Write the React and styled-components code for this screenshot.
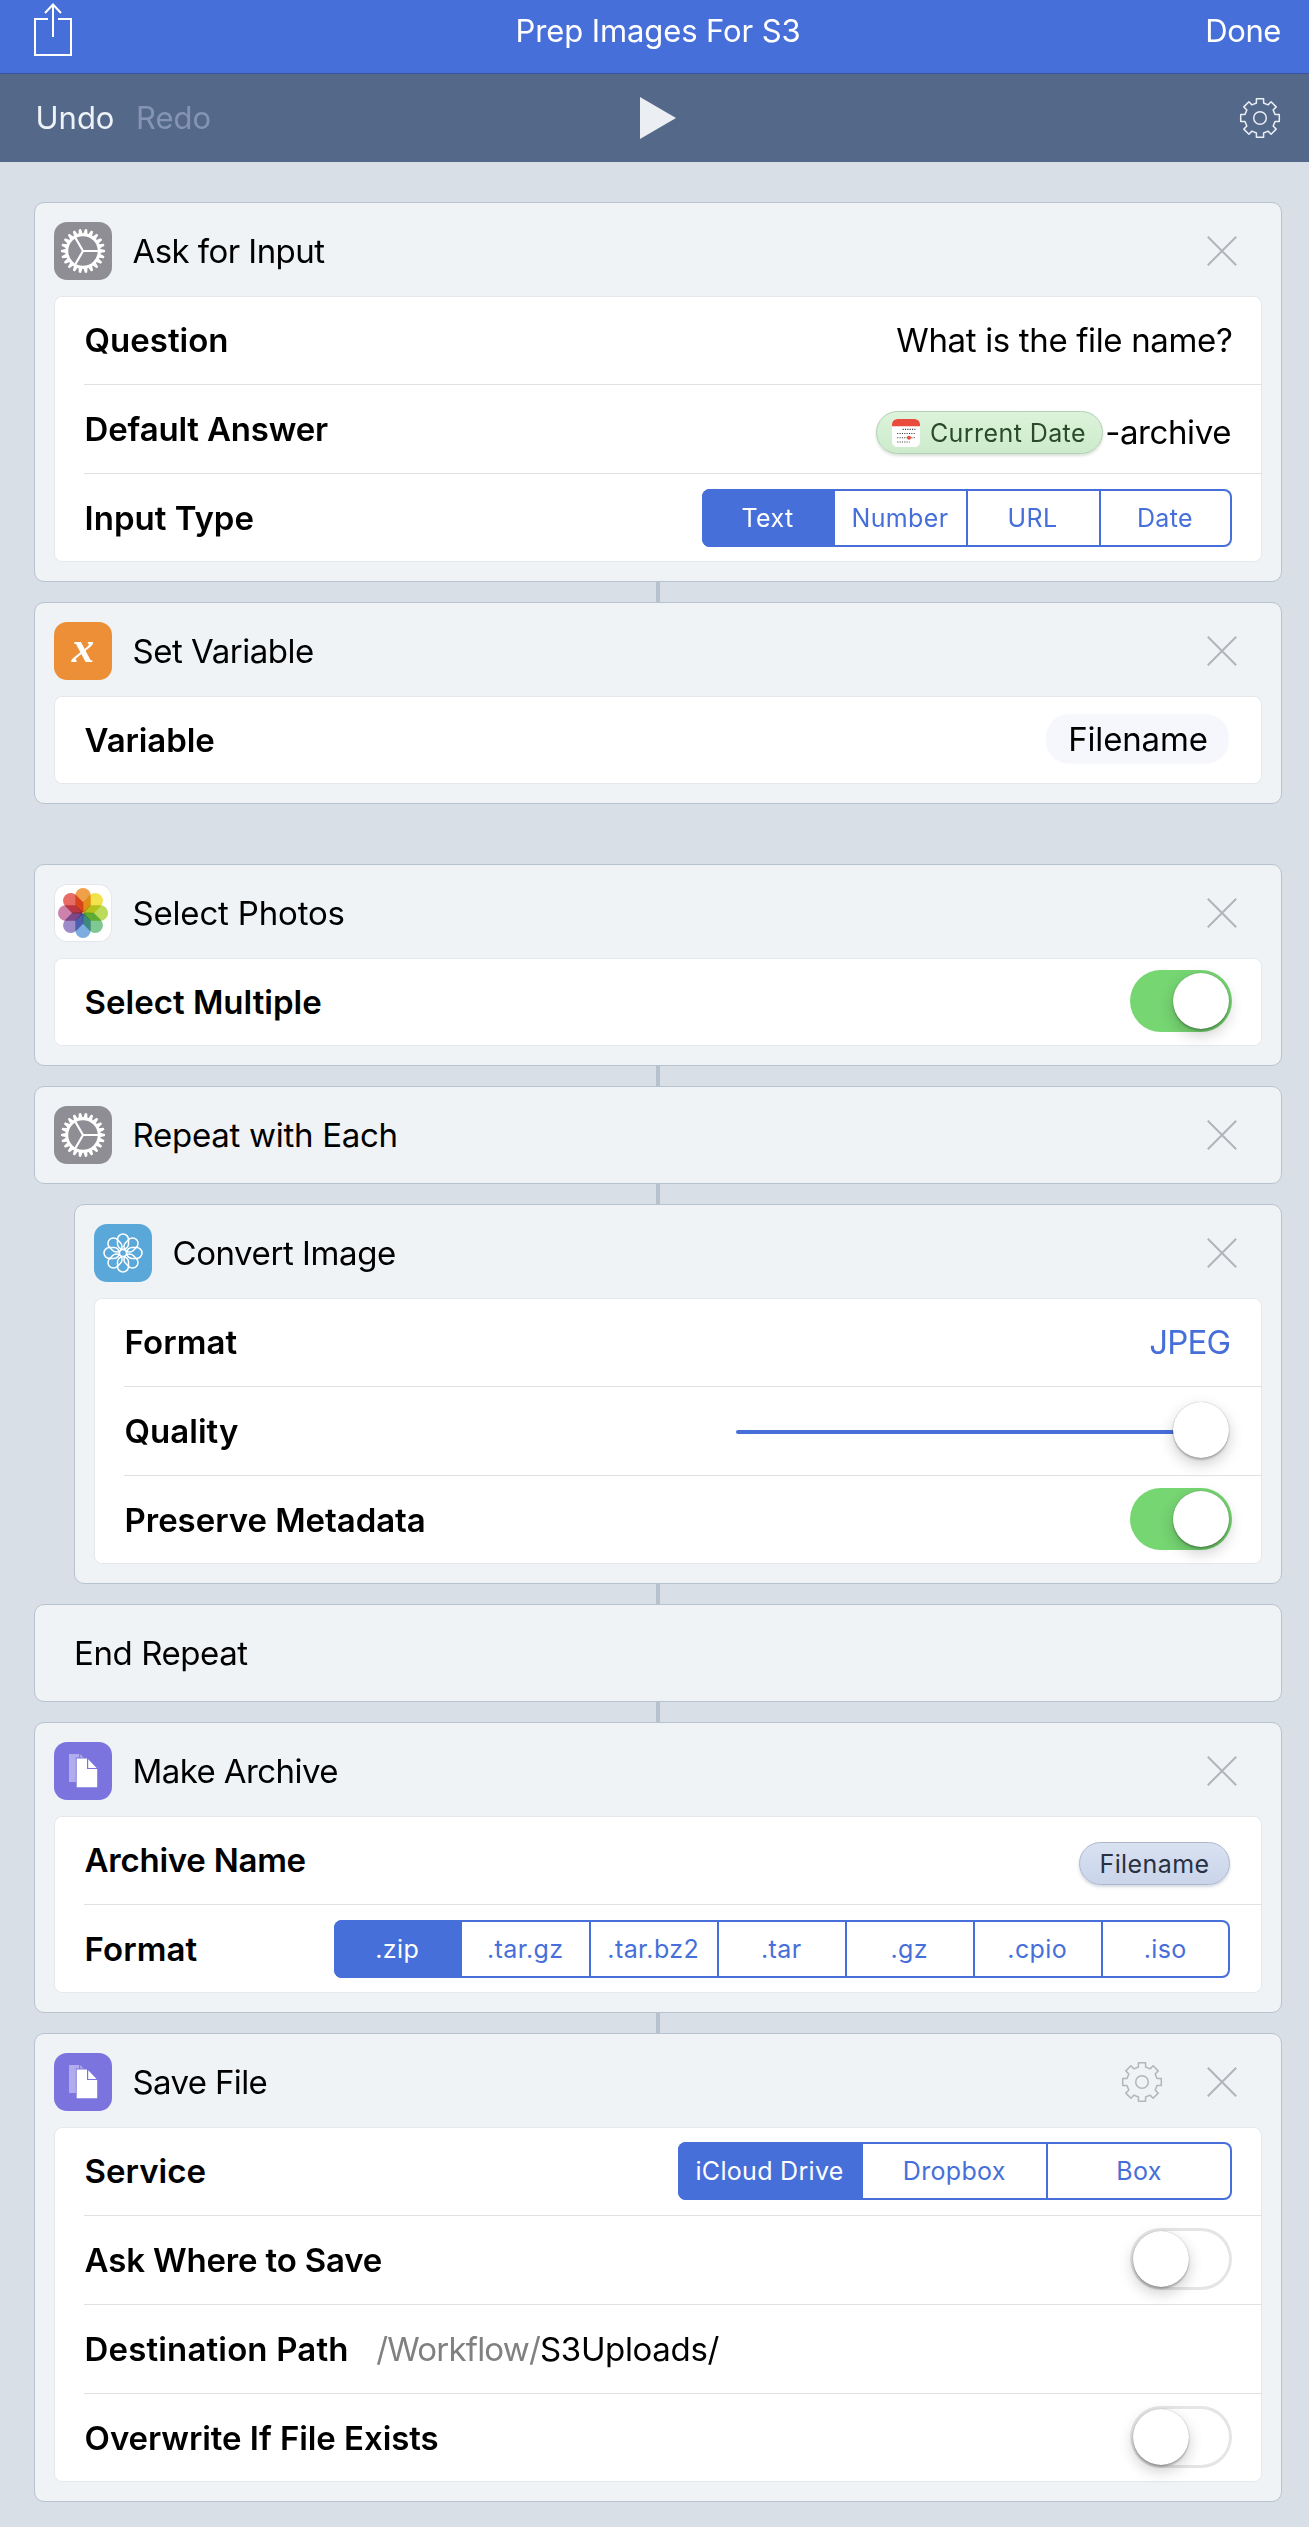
import React from 'react';
import styled, { createGlobalStyle, css } from 'styled-components';

const blue = '#466fd9';

const GlobalStyle = createGlobalStyle`
  *, *::before, *::after { box-sizing: border-box; }
  body {
    margin: 0;
    background: #d9dfe7;
    color: #000;
    font-family: Inter, "Liberation Sans", sans-serif;
  }
  svg { display: block; flex: none; overflow: visible; }
`;

const Page = styled.div`
  display: flex;
  flex-direction: column;
  min-height: 2527px;
`;

const Bar = styled.header`
  display: grid;
  grid-template-columns: 1fr auto 1fr;
  align-items: center;
  padding: 0 27px 0 34px;
  font-size: 31px;
  line-height: 38px;
  white-space: nowrap;
`;

const NavBar = styled(Bar)`
  height: 74px;
  padding-bottom: 11px;
  background: ${blue};
  border-bottom: 1px solid #3a54a4;
  color: #fff;
`;

const ToolBar = styled(Bar)`
  height: 88px;
  background: #54688a;
  color: #eef2f6;
`;

const BarGroup = styled.div`
  display: flex;
  align-items: center;
  gap: 21.5px;
  justify-content: ${(p) => (p.$end ? 'flex-end' : 'flex-start')};
  padding: ${(p) => p.$pad || '0'};
`;

const BarText = styled.span`
  color: ${(p) => (p.$muted ? '#8594b3' : 'inherit')};
  letter-spacing: ${(p) => p.$track || 0}px;
`;

const Flow = styled.main`
  display: flex;
  flex-direction: column;
  padding: 40px 27px 25px 34px;
`;

const Connector = styled.div`
  align-self: center;
  width: 4px;
  height: 20px;
  background: #b6c2cd;
`;

const Break = styled.div`
  height: 60px;
`;

const Card = styled.section`
  display: flex;
  flex-direction: column;
  gap: 16px;
  margin-left: ${(p) => (p.$nested ? 40 : 0)}px;
  padding: 19px;
  background: #eff3f6;
  border: 1px solid #b8c3cf;
  border-radius: 10px;
`;

const CardHeader = styled.div`
  display: flex;
  align-items: center;
  height: 58px;
  padding-right: 25.5px;
  gap: 20.5px;
`;

const CardTitle = styled.h2`
  flex: 1;
  margin: 0;
  padding-left: ${(p) => (p.$bare ? 20 : 0)}px;
  font-size: 33px;
  line-height: 40px;
  font-weight: 400;
  letter-spacing: ${(p) => p.$track || 0}px;
  white-space: nowrap;
`;

const HeaderActions = styled.div`
  display: flex;
  align-items: center;
  gap: 45px;
`;

const Tile = styled.div`
  display: flex;
  align-items: center;
  justify-content: center;
  flex: none;
  width: 58px;
  height: 58px;
  border-radius: 13px;
  background: ${(p) => p.$bg};
  ${(p) => p.$outlined && css`box-shadow: inset 0 0 0 1px #e3e6ea;`}
`;

const TileLetter = styled.span`
  padding-bottom: 9px;
  color: #fff;
  font: italic bold 45px/50px "Liberation Serif", "Times New Roman", serif;
`;

const Body = styled.div`
  display: flex;
  flex-direction: column;
  padding-left: 30px;
  background: #fff;
  border-radius: 8px;
  box-shadow: inset 0 0 0 1px #e4e8ec;
`;

const Row = styled.div`
  display: flex;
  align-items: center;
  justify-content: space-between;
  height: 88px;
  padding-right: ${(p) => p.$inset || 30}px;
  & + & {
    height: 89px;
    border-top: 1px solid #dfe1e3;
  }
`;

const Label = styled.span`
  padding-left: 0.6px;
  font-size: 33px;
  line-height: 40px;
  font-weight: 600;
  letter-spacing: ${(p) => p.$track || 0}px;
  white-space: nowrap;
`;

const Value = styled.span`
  font-size: 33px;
  line-height: 40px;
  color: ${(p) => p.$color || '#000'};
  letter-spacing: ${(p) => p.$track || 0}px;
  white-space: nowrap;
`;

const Path = styled.div`
  display: flex;
  flex: 1;
  padding-left: 27.5px;
`;

const TokenLine = styled.div`
  display: flex;
  align-items: center;
  gap: 2px;
  padding-top: 6px;
`;

const Token = styled.span`
  display: flex;
  align-items: center;
  justify-content: center;
  gap: 10px;
  width: ${(p) => p.$width}px;
  height: 43px;
  padding-top: 1px;
  border-radius: 22px;
  font-size: 25px;
  line-height: 30px;
  letter-spacing: 0.42px;
  white-space: nowrap;
  ${(p) =>
    p.$green
      ? css`
          color: #294b2b;
          background: linear-gradient(#dcf3da, #cdebcc);
          border: 1px solid #b3ceb3;
          box-shadow: 0 2px 3px rgba(60, 110, 60, 0.2);
          padding-right: 1.5px;
        `
      : css`
          color: #283142;
          background: linear-gradient(#d9e2f1, #cad4ea);
          border: 1px solid #adb7cb;
          box-shadow: 0 2px 3px rgba(60, 80, 120, 0.22);
        `}
`;

const VariableField = styled.span`
  display: flex;
  align-items: center;
  justify-content: center;
  width: 181px;
  height: 48px;
  margin-bottom: 2px;
  padding: 0 0 1px 1px;
  border-radius: 22px;
  background: #f6f7fc;
  box-shadow: 0 0 2px rgba(90, 100, 150, 0.12);
`;

const Segments = styled.div`
  display: flex;
  width: ${(p) => p.$width}px;
  height: 58px;
  border-radius: 8px;
  overflow: hidden;
  box-shadow: inset 0 0 0 2px ${blue};
`;

const Segment = styled.button`
  flex: 1 1 0;
  min-width: 0;
  padding: 0 1.5px 0 0;
  border: 0;
  font: 400 25px/30px Inter, "Liberation Sans", sans-serif;
  letter-spacing: ${(p) => p.$track}px;
  white-space: nowrap;
  background: ${(p) => (p.$active ? blue : 'transparent')};
  color: ${(p) => (p.$active ? '#fff' : blue)};
  & + & + & {
    box-shadow: -1px 0 0 ${blue}, inset 1px 0 0 ${blue};
  }
`;

const Knob = styled.span`
  flex: none;
  width: 56px;
  height: 56px;
  border-radius: 50%;
  background: #fff;
  box-shadow: 0 0 1px rgba(0, 0, 0, 0.35), 0 2px 2px rgba(0, 0, 0, 0.22),
    0 6px 15px rgba(0, 0, 0, 0.2);
`;

const SwitchTrack = styled.span`
  display: flex;
  align-items: center;
  justify-content: ${(p) => (p.$on ? 'flex-end' : 'flex-start')};
  width: 102px;
  height: 62px;
  margin-bottom: 2px;
  padding: 0 3px;
  border-radius: 31px;
  background: ${(p) => (p.$on ? '#76d672' : '#fff')};
  box-shadow: ${(p) => (p.$on ? 'none' : 'inset 0 0 0 3px #e5e5e5')};
`;

const SliderBox = styled.div`
  display: flex;
  align-items: center;
  width: 493px;
  margin-bottom: 2px;
`;

const SliderTrack = styled.span`
  flex: 1;
  height: 4px;
  margin: 4px -2px 0 0;
  border-radius: 2px;
  background: ${blue};
`;

const ShareBox = styled.span`
  padding-bottom: 3px;
`;

const Petal = styled.path`
  mix-blend-mode: multiply;
`;

const ShareIcon = () => (
  <ShareBox>
    <svg width="38" height="53" viewBox="0 0 38 53" fill="none" stroke="#fff" strokeWidth="2">
      <path d="M14 16H1v36h36V16H24M19 34V2M11 10l8-8.5 8 8.5" />
    </svg>
  </ShareBox>
);

const PlayIcon = () => (
  <svg width="36" height="42" viewBox="0 0 36 42">
    <path d="M0 0L36 21L0 42z" fill="#ebeff3" />
  </svg>
);

const gearOutline = (() => {
  const pts = [];
  for (let k = 0; k < 8; k++) {
    const a = (k * Math.PI) / 4;
    [[-3.6, -15], [-3.6, -19.3], [3.6, -19.3], [3.6, -15]].forEach(([x, y]) => {
      pts.push(
        `${(x * Math.cos(a) - y * Math.sin(a)).toFixed(2)},${(x * Math.sin(a) + y * Math.cos(a)).toFixed(2)}`
      );
    });
  }
  return pts.join(' ');
})();

const GearIcon = ({ color }) => (
  <svg width="40" height="40" viewBox="-20 -20 40 40" fill="none" stroke={color} strokeWidth="1.5">
    <polygon points={gearOutline} strokeLinejoin="round" />
    <circle r="6.3" />
  </svg>
);

const CloseIcon = () => (
  <svg width="30" height="30" viewBox="0 0 30 30" stroke="#b1b4b8" strokeWidth="2">
    <path d="M0.8 0.8L29.2 29.2M29.2 0.8L0.8 29.2" />
  </svg>
);

const CogTile = () => (
  <Tile $bg="#8f8e94">
    <svg width="44" height="44" viewBox="-22 -22 44 44" stroke="#fff" fill="none">
      <circle r="16.2" strokeWidth="2.9" />
      {Array.from({ length: 22 }, (_, i) => (
        <path
          key={i}
          d="M16.5 -2.2L22 -1.1L22 1.1L16.5 2.2z"
          fill="#fff"
          stroke="none"
          transform={`rotate(${(i * 360) / 22})`}
        />
      ))}
      <path d="M0 0H15M0 0L-7.5 -13M0 0L-7.5 13" strokeWidth="2.2" />
    </svg>
  </Tile>
);

const petals = ['#efa048', '#f2e34c', '#bddb5a', '#7fc891', '#7cade0', '#9c8cc8', '#cd82ad', '#e66c64'];

const PhotosTile = () => (
  <Tile $bg="#fff" $outlined>
    <svg width="50" height="50" viewBox="-25 -25 50 50">
      {petals.map((c, i) => (
        <Petal
          key={c}
          d="M-7.7 -17.3A7.7 7.7 0 0 1 7.7 -17.3V-7.5L1.2 -0.6H-1.2L-7.7 -7.5z"
          fill={c}
          transform={`rotate(${i * 45})`}
        />
      ))}
    </svg>
  </Tile>
);

const FlowerTile = () => (
  <Tile $bg="#5aa8d9">
    <svg width="40" height="40" viewBox="-20 -20 40 40" fill="none" stroke="#fff" strokeWidth="1.5">
      {petals.map((c, i) => (
        <rect key={c} x="-5.5" y="-19" width="11" height="15.4" rx="5.5" transform={`rotate(${i * 45})`} />
      ))}
      <circle r="3.6" />
    </svg>
  </Tile>
);

const FilesTile = () => (
  <Tile $bg="#7b74df">
    <svg width="58" height="58" viewBox="0 0 58 58">
      <path d="M15 12H25.2V22L30 17.5V40H15z" fill="#b0acee" />
      <path d="M26.2 12L31 17V18H26.2z" fill="#b0acee" />
      <path d="M21.8 15.5H34L44 27V46H21.8z" fill="#7b74df" />
      <path d="M22.7 16.5H33V27H43.2V45.3H22.7z" fill="#fff" />
      <path d="M34.2 17.2L42.6 25.9H34.2z" fill="#fff" />
    </svg>
  </Tile>
);

const CalendarIcon = () => (
  <svg width="28" height="28" viewBox="0 0 28 28">
    <rect width="28" height="28" rx="5.5" fill="#fff" />
    <path d="M0 7.2V5.5A5.5 5.5 0 0 1 5.5 0H22.5A5.5 5.5 0 0 1 28 5.5V7.2z" fill="#e94b3c" />
    <g stroke="#3c3c3c" strokeWidth="1.1" strokeDasharray="1.1 1.25">
      <path d="M10.6 10.4H23.6M5.2 14.5H23.6M5.2 18.7H23.6M5.2 23H17.6" />
    </g>
    <circle cx="17" cy="18.7" r="2" fill="#e94b3c" />
  </svg>
);

const Header = ({ icon, title, track, settings }) => (
  <CardHeader>
    {icon}
    <CardTitle $track={track}>{title}</CardTitle>
    <HeaderActions>
      {settings && <GearIcon color="#b3b6b9" />}
      <CloseIcon />
    </HeaderActions>
  </CardHeader>
);

const Switch = ({ on }) => (
  <SwitchTrack $on={on}>
    <Knob />
  </SwitchTrack>
);

const SegmentedControl = ({ width, options, track = 0.4 }) => (
  <Segments $width={width}>
    {options.map((o, i) => (
      <Segment key={o} $active={i === 0} $track={track}>
        {o}
      </Segment>
    ))}
  </Segments>
);

export default function App() {
  return (
    <Page>
      <GlobalStyle />
      <NavBar>
        <BarGroup>
          <ShareIcon />
        </BarGroup>
        <BarText $track={-0.1}>Prep Images For S3</BarText>
        <BarGroup $end $pad="0 1px 0 0">
          <BarText $track={-0.4}>Done</BarText>
        </BarGroup>
      </NavBar>
      <ToolBar>
        <BarGroup $pad="0 0 0 1.5px">
          <BarText>Undo</BarText>
          <BarText $muted>Redo</BarText>
        </BarGroup>
        <PlayIcon />
        <BarGroup $end $pad="0 2.5px 0 0">
          <GearIcon color="#e9eef4" />
        </BarGroup>
      </ToolBar>

      <Flow>
        <Card>
          <Header icon={<CogTile />} title="Ask for Input" track={-0.56} />
          <Body>
            <Row $inset={29.5}>
              <Label>Question</Label>
              <Value $track={-0.35}>What is the file name?</Value>
            </Row>
            <Row $inset={31}>
              <Label $track={-0.18}>Default Answer</Label>
              <TokenLine>
                <Token $width={227} $green>
                  <CalendarIcon />
                  Current Date
                </Token>
                <Value $track={-0.41}>-archive</Value>
              </TokenLine>
            </Row>
            <Row>
              <Label>Input Type</Label>
              <SegmentedControl width={530} options={['Text', 'Number', 'URL', 'Date']} />
            </Row>
          </Body>
        </Card>
        <Connector />
        <Card>
          <Header
            icon={
              <Tile $bg="#ec8f36">
                <TileLetter>x</TileLetter>
              </Tile>
            }
            title="Set Variable"
            track={-0.48}
          />
          <Body>
            <Row $inset={34}>
              <Label $track={-0.1}>Variable</Label>
              <VariableField>
                <Value $track={-0.16}>Filename</Value>
              </VariableField>
            </Row>
          </Body>
        </Card>
        <Break />
        <Card>
          <Header icon={<PhotosTile />} title="Select Photos" track={-0.18} />
          <Body>
            <Row>
              <Label>Select Multiple</Label>
              <Switch on />
            </Row>
          </Body>
        </Card>
        <Connector />
        <Card>
          <Header icon={<CogTile />} title="Repeat with Each" track={-0.27} />
        </Card>
        <Connector />
        <Card $nested>
          <Header icon={<FlowerTile />} title="Convert Image" track={-0.43} />
          <Body>
            <Row $inset={31.5}>
              <Label $track={0.1}>Format</Label>
              <Value $color={blue} $track={-0.75}>JPEG</Value>
            </Row>
            <Row $inset={33}>
              <Label>Quality</Label>
              <SliderBox>
                <SliderTrack />
                <Knob />
              </SliderBox>
            </Row>
            <Row>
              <Label $track={-0.05}>Preserve Metadata</Label>
              <Switch on />
            </Row>
          </Body>
        </Card>
        <Connector />
        <Card>
          <CardHeader>
            <CardTitle $bare $track={-0.42}>End Repeat</CardTitle>
          </CardHeader>
        </Card>
        <Connector />
        <Card>
          <Header icon={<FilesTile />} title="Make Archive" track={-0.58} />
          <Body>
            <Row $inset={32}>
              <Label $track={-0.25}>Archive Name</Label>
              <TokenLine>
                <Token $width={151}>Filename</Token>
              </TokenLine>
            </Row>
            <Row $inset={32}>
              <Label $track={0.1}>Format</Label>
              <SegmentedControl
                width={896}
                options={['.zip', '.tar.gz', '.tar.bz2', '.tar', '.gz', '.cpio', '.iso']}
              />
            </Row>
          </Body>
        </Card>
        <Connector />
        <Card>
          <Header icon={<FilesTile />} title="Save File" track={-0.64} settings />
          <Body>
            <Row>
              <Label>Service</Label>
              <SegmentedControl width={554} track={0.3} options={['iCloud Drive', 'Dropbox', 'Box']} />
            </Row>
            <Row>
              <Label $track={-0.17}>Ask Where to Save</Label>
              <Switch />
            </Row>
            <Row>
              <Label $track={0.15}>Destination Path</Label>
              <Path>
                <Value $color="#808080" $track={-0.8}>/Workflow/</Value>
                <Value $track={-0.35}>S3Uploads/</Value>
              </Path>
            </Row>
            <Row>
              <Label $track={-0.07}>Overwrite If File Exists</Label>
              <Switch />
            </Row>
          </Body>
        </Card>
      </Flow>
    </Page>
  );
}
